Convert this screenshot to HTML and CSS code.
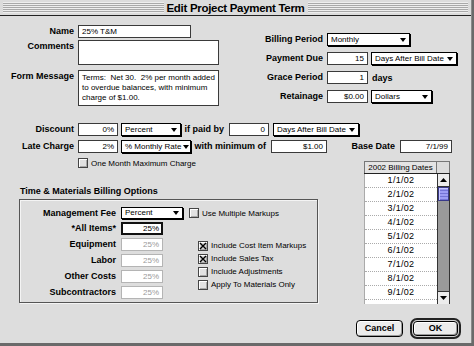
FILE: index.html
```html
<!DOCTYPE html>
<html>
  <head>
    <meta charset="UTF-8">
    <title>Edit Project Payment Term</title>
    <link rel="stylesheet" href="styles.css">
  </head>
  <body>
    <div class="window">
      <!-- Title bar -->
      <div class="titlebar">
        <div class="stripes"></div>
        <div class="title">Edit Project Payment Term</div>
        <div class="stripes"></div>
      </div>

      <!-- Name / message and billing period -->
      <div class="top">
        <div class="info">
          <div class="lbl">Name</div>
          <div class="field name-field">25% T&amp;M</div>
          <div class="lbl">Comments</div>
          <div class="field comments-field"></div>
          <div class="lbl msg">Form Message</div>
          <div class="field msg msg-field">Terms:&nbsp; Net 30.&nbsp; 2% per month added<br>to overdue balances, with minimum<br>charge of $1.00.</div>
        </div>
        <div class="billing">
          <div class="lbl">Billing Period</div>
          <div class="cells"><div class="popup w-period">Monthly</div></div>
          <div class="lbl">Payment Due</div>
          <div class="cells"><div class="field num w-small">15</div><div class="popup w-days">Days After Bill Date</div></div>
          <div class="lbl">Grace Period</div>
          <div class="cells"><div class="field num w-small">1</div><span class="unit">days</span></div>
          <div class="lbl">Retainage</div>
          <div class="cells"><div class="field num w-small">$0.00</div><div class="popup w-dollars">Dollars</div></div>
        </div>
      </div>

      <!-- Discount / late charge -->
      <div class="row discount">
        <div class="lbl row-lbl">Discount</div>
        <div class="field num w-pct">0%</div>
        <div class="popup w-percent">Percent</div>
        <div class="lbl gap-lbl w-paid">if paid by</div>
        <div class="field num w-pct">0</div>
        <div class="popup w-after">Days After Bill Date</div>
      </div>
      <div class="row late">
        <div class="lbl row-lbl">Late Charge</div>
        <div class="field num w-pct">2%</div>
        <div class="popup w-rate">% Monthly Rate</div>
        <div class="lbl gap-lbl w-min">with minimum of</div>
        <div class="field num w-minval">$1.00</div>
        <div class="lbl gap-lbl w-base">Base Date</div>
        <div class="field num w-date">7/1/99</div>
      </div>

      <div class="bottom">
        <div class="bottom-left">
          <div class="check-line max-charge"><span class="cb"></span>One Month Maximum Charge</div>

          <!-- Time & Materials -->
          <div class="group-title">Time &amp; Materials Billing Options</div>
          <div class="group">
            <div class="lbl">Management Fee</div>
            <div class="popup w-fee">Percent</div>
            <div class="check-line multi"><span class="cb"></span>Use Multiple Markups</div>

            <div class="lbl">*All Items*</div>
            <div class="field num w-item active">25%</div>
            <div></div>

            <div class="lbl">Equipment</div>
            <div class="field num w-item off">25%</div>
            <div class="lbl">Labor</div>
            <div class="field num w-item off">25%</div>
            <div class="lbl">Other Costs</div>
            <div class="field num w-item off">25%</div>
            <div class="lbl">Subcontractors</div>
            <div class="field num w-item off">25%</div>

            <div class="checks">
              <div class="check-line"><span class="cb on"><svg width="8" height="8" viewBox="0 0 8 8"><path d="M1 1L7 7M7 1L1 7" stroke="#000" stroke-width="1.4"/></svg></span>Include Cost Item Markups</div>
              <div class="check-line"><span class="cb on"><svg width="8" height="8" viewBox="0 0 8 8"><path d="M1 1L7 7M7 1L1 7" stroke="#000" stroke-width="1.4"/></svg></span>Include Sales Tax</div>
              <div class="check-line"><span class="cb"></span>Include Adjustments</div>
              <div class="check-line"><span class="cb"></span>Apply To Materials Only</div>
            </div>
          </div>
        </div>

        <div class="bottom-right">
          <!-- Billing dates list -->
          <div class="dates">
            <div class="dates-head">
              <div class="head-cell">2002 Billing Dates</div>
              <div class="head-corner"></div>
            </div>
            <div class="dates-body">
              <div class="date-rows">
                <div class="date-row">1/1/02</div>
                <div class="date-row">2/1/02</div>
                <div class="date-row">3/1/02</div>
                <div class="date-row">4/1/02</div>
                <div class="date-row">5/1/02</div>
                <div class="date-row">6/1/02</div>
                <div class="date-row">7/1/02</div>
                <div class="date-row">8/1/02</div>
                <div class="date-row">9/1/02</div>
                <div class="date-row"></div>
              </div>
              <div class="scroll">
                <div class="arrow"><svg width="7" height="4" viewBox="0 0 7 4"><path d="M0 4L3.5 0L7 4Z" fill="#000"/></svg></div>
                <div class="thumb"></div>
                <div class="arrow down"><svg width="7" height="4" viewBox="0 0 7 4"><path d="M0 0L3.5 4L7 0Z" fill="#000"/></svg></div>
              </div>
            </div>
          </div>

          <div class="buttons">
            <div class="btn cancel">Cancel</div>
            <div class="ring"><div class="btn ok">OK</div></div>
          </div>
        </div>
      </div>
    </div>
  </body>
</html>
```

FILE: styles.css
```css
body {
  margin: 0;
  background: #6a6a6a;
  font-family: "Liberation Sans", Arial, sans-serif;
  color: #000;
}

.window {
  width: 472px;
  height: 343px;
  background: #dddddd;
  border-right: 1px solid #8a8a8a;
  box-sizing: border-box;
  overflow: hidden;
}

/* title bar */
.titlebar {
  height: 15px;
  border-bottom: 1px solid #222;
  display: flex;
  align-items: center;
  padding: 0 3px;
  background: #dcdcdc;
}

.stripes {
  flex: 1;
  height: 11px;
  background: repeating-linear-gradient(#eeeeee 0 1px, #a9a9a9 1px 2px);
}

.title {
  font-weight: bold;
  font-size: 11.5px;
  letter-spacing: -0.3px;
  padding: 0 3px;
}

/* shared controls */
.lbl {
  font-weight: bold;
  font-size: 9px;
  line-height: 13px;
  text-align: right;
  white-space: nowrap;
}

.field {
  background: #fff;
  border: 1px solid #3a3a3a;
  box-sizing: border-box;
  height: 13px;
  font-size: 8px;
  line-height: 11px;
  padding: 0 3px;
  white-space: nowrap;
}

.num {
  text-align: right;
}

.popup {
  background: #fff;
  border: 1px solid #000;
  box-shadow: 1px 1px 0 #000;
  box-sizing: border-box;
  height: 13px;
  font-size: 8px;
  line-height: 11px;
  padding: 0 3px;
  display: flex;
  align-items: center;
  justify-content: space-between;
  white-space: nowrap;
}

.popup::after {
  content: "";
  border-left: 3.5px solid transparent;
  border-right: 3.5px solid transparent;
  border-top: 4px solid #000;
  margin-left: 2px;
}

.cb {
  display: inline-flex;
  align-items: center;
  justify-content: center;
  width: 10px;
  height: 10px;
  box-sizing: border-box;
  border: 1px solid #444;
  background: #e2e2e2;
  box-shadow: inset 1px 1px 0 #fff, inset -1px -1px 0 #a8a8a8;
  margin-right: 3px;
  flex: none;
}

.cb.on {
  background: #d6d6d6;
}

.check-line {
  display: flex;
  align-items: center;
  font-size: 8px;
  height: 13px;
  white-space: nowrap;
}

/* top part */
.top {
  display: flex;
  align-items: flex-start;
  margin-top: 9px;
}

.info {
  display: grid;
  grid-template-columns: 74px 141px;
  column-gap: 4px;
  row-gap: 2px;
  width: 219px;
}

.name-field {
  width: 113px;
}

.comments-field {
  height: 25px;
}

.msg {
  margin-top: 3px;
}

.msg-field {
  height: 36px;
  line-height: 10px;
  padding-top: 2px;
}

.billing {
  display: grid;
  grid-template-columns: 104px auto;
  column-gap: 4px;
  row-gap: 6px;
  margin-top: 8px;
}

.cells {
  display: flex;
  align-items: center;
  gap: 3px;
}

.w-period { width: 83px; }
.w-small { width: 41px; }
.w-days { width: 86px; }
.w-dollars { width: 61px; }

.unit {
  font-weight: bold;
  font-size: 9px;
  margin-left: 1px;
}

/* discount rows */
.row {
  display: flex;
  align-items: center;
  height: 13px;
}

.discount {
  margin-top: 17px;
}

.late {
  margin-top: 4px;
}

.row-lbl {
  width: 74px;
  margin-right: 4px;
}

.w-pct { width: 40px; }
.w-percent { width: 60px; margin-left: 3px; }
.w-rate { width: 70px; margin-left: 3px; }
.w-after { width: 86px; margin-left: 4px; }
.w-minval { width: 56px; }
.w-date { width: 52px; }

.gap-lbl {
  padding-right: 5px;
  box-sizing: border-box;
}

.w-paid { width: 48px; }
.w-min { width: 80px; }
.w-base { width: 73px; }

/* bottom part */
.bottom {
  display: flex;
  align-items: flex-start;
}

.bottom-left {
  width: 360px;
}

.max-charge {
  margin: 5px 0 0 78px;
  height: 10px;
}

.group-title {
  font-weight: bold;
  font-size: 9px;
  line-height: 11px;
  margin: 18px 0 2px 20px;
}

.group {
  margin-left: 19px;
  width: 299px;
  height: 104px;
  box-sizing: border-box;
  border: 1px solid #555;
  box-shadow: inset 1px 1px 0 #f4f4f4, 1px 1px 0 #f4f4f4;
  padding-top: 7px;
  display: grid;
  grid-template-columns: 96px 62px 1fr;
  grid-template-rows: 12px 13px 13px 13px 13px 13px;
  column-gap: 5px;
  row-gap: 3px;
}

.group .lbl {
  line-height: 12px;
}

.w-fee {
  height: 12px;
  line-height: 10px;
}

.multi {
  margin-left: 1px;
  height: 12px;
}

.w-item {
  width: 42px;
}

.active {
  border: 2px solid #111;
  line-height: 9px;
  padding-right: 2px;
}

.off {
  border-color: #b4b4b4;
  color: #9a9a9a;
}

.checks {
  grid-column: 3;
  grid-row: 3 / 7;
  margin: 1px 0 0 10px;
}

.bottom-right {
  width: 104px;
}

/* billing dates list */
.dates {
  margin: 8px 0 0 4px;
  width: 86px;
}

.dates-head {
  display: flex;
  height: 12px;
  border-bottom: 1px solid #222;
}

.head-cell {
  width: 73px;
  box-sizing: border-box;
  border: 1px solid #777;
  border-bottom: none;
  background: #e4e4e4;
  font-size: 8px;
  line-height: 11px;
  text-align: center;
}

.head-corner {
  width: 13px;
  box-sizing: border-box;
  border: 1px solid #777;
  border-left: none;
  border-bottom: none;
  background: #dcdcdc;
}

.dates-body {
  display: flex;
  height: 130px;
}

.date-rows {
  width: 73px;
  background: #fff;
  border-left: 1px solid #aaa;
  box-sizing: border-box;
  overflow: hidden;
}

.date-row {
  height: 14px;
  box-sizing: border-box;
  border-bottom: 1px dotted #aaa;
  font-size: 9px;
  line-height: 13px;
  text-align: center;
  letter-spacing: 0.3px;
}

.scroll {
  width: 13px;
  box-sizing: border-box;
  background: #9a9a9a;
  border: 1px solid #333;
  border-top: none;
  border-bottom: none;
  display: flex;
  flex-direction: column;
}

.arrow {
  height: 13px;
  background: #ececec;
  border-bottom: 1px solid #333;
  box-sizing: border-box;
  display: flex;
  align-items: center;
  justify-content: center;
}

.arrow.down {
  margin-top: auto;
  border-bottom: none;
  border-top: 1px solid #333;
}

.thumb {
  height: 14px;
  box-sizing: border-box;
  border: 1px solid #3a3a8a;
  background: repeating-linear-gradient(#9c9cf4 0 2px, #7373d6 2px 3px);
  box-shadow: inset 1px 1px 0 #c8c8ff;
}

/* buttons */
.buttons {
  display: flex;
  align-items: center;
  margin: 14px 0 0 -4px;
  gap: 7px;
}

.btn {
  box-sizing: border-box;
  border: 1px solid #000;
  border-radius: 4px;
  background: #ececec;
  box-shadow: inset 1px 1px 0 #fff, inset -1px -1px 0 #9a9a9a;
  font-weight: bold;
  font-size: 9px;
  text-align: center;
}

.cancel {
  width: 47px;
  height: 17px;
  line-height: 15px;
}

.ring {
  width: 51px;
  height: 21px;
  box-sizing: border-box;
  border: 2px solid #222;
  border-radius: 7px;
  padding: 1px;
  background: #d0d0d0;
}

.ok {
  height: 15px;
  line-height: 13px;
}
```
